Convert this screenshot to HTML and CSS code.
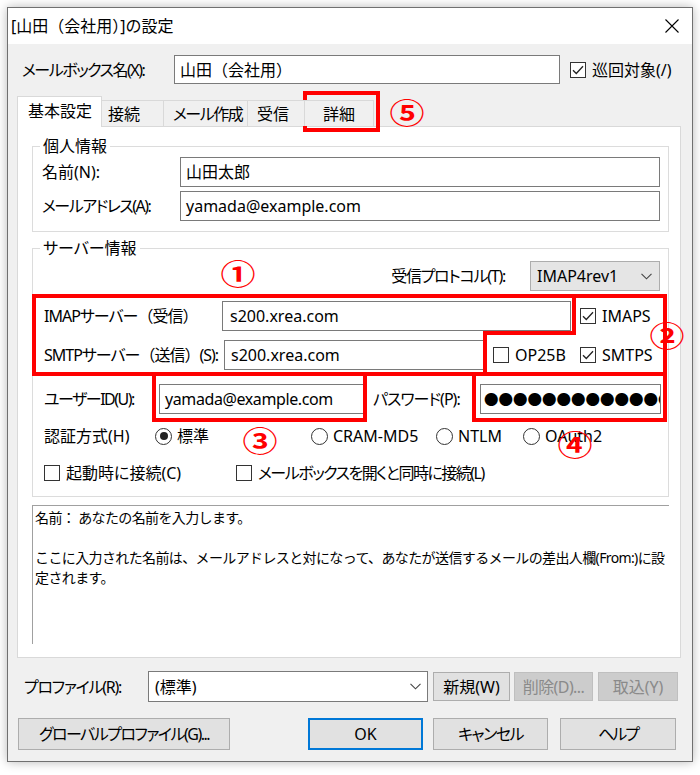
FILE: index.html
```html
<!DOCTYPE html>
<html lang="ja">
<head>
<meta charset="utf-8">
<title>[山田（会社用）]の設定</title>
<link rel="stylesheet" href="styles.css">
</head>
<body>
<div class="window">
  <div class="titlebar">
    <span class="title">[山田（会社用）]の設定</span>
    <svg class="close" width="14" height="14" viewBox="0 0 14 14"><path d="M0.5 0.5L13.5 13.5M13.5 0.5L0.5 13.5" stroke="#000" stroke-width="1.1" fill="none"/></svg>
  </div>
  <div class="client">
    <div class="mb-row">
      <span class="mb-label t15">メールボックス名(X):</span>
      <div class="textbox mb-input">山田（会社用）</div>
      <span class="check-item mb-check"><span class="cb"><svg width="14" height="14" viewBox="0 0 14 14"><path d="M2 7.2L5.3 10.5L12 3.2" stroke="#222" stroke-width="1.3" fill="none"/></svg></span><span>巡回対象(/)</span></span>
    </div>

    <div class="tabs">
      <div class="tab active">基本設定</div>
      <div class="tab t-conn">接続</div>
      <div class="tab t-compose t15">メール作成</div>
      <div class="tab t-recv">受信</div>
      <div class="tab t-detail">詳細</div>
    </div>

    <div class="panel">
      <fieldset class="group g-personal">
        <legend>個人情報</legend>
        <div class="frow name-row">
          <span class="flabel w147">名前(N):</span>
          <div class="textbox w480">山田太郎</div>
        </div>
        <div class="frow mail-row">
          <span class="flabel w147 t15">メールアドレス(A):</span>
          <div class="textbox w480">yamada@example.com</div>
        </div>
      </fieldset>

      <fieldset class="group g-server">
        <legend>サーバー情報</legend>
        <div class="frow proto-row">
          <span class="proto-label t12">受信プロトコル(T):</span>
          <div class="select proto-select"><span>IMAP4rev1</span><svg width="11" height="7" viewBox="0 0 11 7"><path d="M0.5 0.8L5.5 5.8L10.5 0.8" stroke="#444" stroke-width="1.1" fill="none"/></svg></div>
        </div>
        <div class="frow imap-row">
          <span class="flabel w189 t1">IMAPサーバー<span class="fw">（受信）</span></span>
          <div class="textbox pad7 w349">s200.xrea.com</div>
          <span class="check-item imaps"><span class="cb"><svg width="14" height="14" viewBox="0 0 14 14"><path d="M2 7.2L5.3 10.5L12 3.2" stroke="#222" stroke-width="1.3" fill="none"/></svg></span><span>IMAPS</span></span>
        </div>
        <div class="frow smtp-row">
          <span class="flabel w191 t1">SMTPサーバー<span class="fw">（送信）</span>(S):</span>
          <div class="textbox pad6 w260">s200.xrea.com</div>
          <span class="check-item op25b"><span class="cb"></span><span>OP25B</span></span>
          <span class="check-item"><span class="cb"><svg width="14" height="14" viewBox="0 0 14 14"><path d="M2 7.2L5.3 10.5L12 3.2" stroke="#222" stroke-width="1.3" fill="none"/></svg></span><span>SMTPS</span></span>
        </div>
        <div class="frow user-row">
          <span class="flabel w126 t15">ユーザーID(U):</span>
          <div class="textbox w205 latin">yamada@example.com</div>
          <span class="pw-label t1">パスワード(P):</span>
          <div class="textbox pw-box">●●●●●●●●●●●●●●</div>
        </div>
        <div class="frow auth-row">
          <span class="flabel w122">認証方式(H)</span>
          <span class="check-item w156"><span class="rb on"></span><span>標準</span></span>
          <span class="check-item w125"><span class="rb"></span><span>CRAM-MD5</span></span>
          <span class="check-item w87"><span class="rb"></span><span>NTLM</span></span>
          <span class="check-item"><span class="rb"></span><span>OAuth2</span></span>
        </div>
        <div class="frow opt-row">
          <span class="check-item w192"><span class="cb"></span><span>起動時に接続(C)</span></span>
          <span class="check-item"><span class="cb"></span><span class="t15">メールボックスを開くと同時に接続(L)</span></span>
        </div>
      </fieldset>

      <div class="help">
        <p>名前： あなたの名前を入力します。</p>
        <p>&nbsp;</p>
        <p>ここに入力された名前は、メールアドレスと対になって、あなたが送信するメールの差出人欄(From:)に設</p>
        <p>定されます。</p>
      </div>
    </div>

    <div class="profile-row">
      <span class="pr-label t12">プロファイル(R):</span>
      <div class="select edit pr-select"><span>(標準)</span><svg width="11" height="7" viewBox="0 0 11 7"><path d="M0.5 0.8L5.5 5.8L10.5 0.8" stroke="#444" stroke-width="1.1" fill="none"/></svg></div>
      <div class="btn b-new">新規(W)</div>
      <div class="btn disabled b-del t05">削除(D)...</div>
      <div class="btn disabled b-imp">取込(Y)</div>
    </div>

    <div class="button-row">
      <div class="btn b-global t15">グローバルプロファイル(G)...</div>
      <div class="btn default b-ok">OK</div>
      <div class="btn b-cancel t15">キャンセル</div>
      <div class="btn b-help t2">ヘルプ</div>
    </div>
  </div>
</div>

<svg class="overlay" width="700" height="775" viewBox="0 0 700 775">
  <g fill="none" stroke="#ff0000" stroke-width="4">
    <rect x="305" y="93" width="73" height="37"/>
    <path d="M34 296H665V374H34Z"/>
    <path d="M574 296V333H485V374"/>
    <path d="M154 374V420H365V374"/>
    <path d="M474 374V420H665V374"/>
  </g>
  <g class="marks">
    <text transform="translate(238 273) scale(1.25 1)">①</text>
    <text transform="translate(667 335) scale(1.25 1)">②</text>
    <text transform="translate(260 440) scale(1.25 1)">③</text>
    <text transform="translate(575 444) scale(1.25 1)">④</text>
    <text transform="translate(407 112) scale(1.25 1)">⑤</text>
  </g>
</svg>
</body>
</html>
```

FILE: styles.css
```css
* {
  box-sizing: border-box;
}

html,
body {
  margin: 0;
  padding: 0;
}

body {
  width: 700px;
  height: 775px;
  overflow: hidden;
  position: relative;
  background: #ffffff;
  font-family: "Noto Sans", "Noto Sans CJK JP", sans-serif;
  font-size: 16px;
  line-height: 20px;
  color: #000;
  font-feature-settings: "palt" 1;
}

/* letter-spacing helpers for condensed UI kana */
.t05 { letter-spacing: -0.6px; }
.t1 { letter-spacing: -1px; }
.t12 { letter-spacing: -1.25px; }
.t15 { letter-spacing: -1.5px; }
.t2 { letter-spacing: -2px; }

.fw {
  font-feature-settings: normal;
}

.window {
  margin: 7px 0 0 7px;
  width: 686px;
  height: 755px;
  border: 1px solid #707070;
  box-shadow: 0 0 10px rgba(0, 0, 0, 0.28);
  display: flex;
  flex-direction: column;
  background: #f0f0f0;
}

.titlebar {
  flex: none;
  height: 36px;
  background: #fff;
  display: flex;
  align-items: center;
  justify-content: space-between;
  padding: 0 13px 0 3px;
}

.title {
  font-feature-settings: normal;
}

.close {
  display: block;
}

.client {
  flex: 1;
  display: flex;
  flex-direction: column;
}

/* generic controls */
.textbox {
  flex: none;
  height: 30px;
  background: #fff;
  border: 1px solid #7a7a7a;
  padding-left: 5px;
  display: flex;
  align-items: center;
  white-space: nowrap;
  overflow: hidden;
  font-feature-settings: normal;
}

.latin {
  letter-spacing: -0.4px;
}

.pad7 { padding-left: 7px; }
.pad6 { padding-left: 6px; }

.check-item {
  flex: none;
  display: flex;
  align-items: center;
  white-space: nowrap;
}

.cb {
  flex: none;
  width: 16px;
  height: 16px;
  border: 1px solid #333;
  background: #fff;
  margin-right: 6px;
  display: flex;
  align-items: center;
  justify-content: center;
}

.cb svg {
  display: block;
}

.rb {
  flex: none;
  width: 17px;
  height: 17px;
  border: 1px solid #333;
  border-radius: 50%;
  background: #fff;
  margin-right: 5px;
  display: flex;
  align-items: center;
  justify-content: center;
}

.rb.on::after {
  content: "";
  width: 8px;
  height: 8px;
  border-radius: 50%;
  background: #222;
}

.select {
  flex: none;
  height: 30px;
  border: 1px solid #adadad;
  background: #e5e5e5;
  display: flex;
  align-items: center;
  justify-content: space-between;
  padding: 0 7px 0 6px;
  white-space: nowrap;
}

.select svg {
  display: block;
}

.select.edit {
  background: #fff;
  border-color: #7a7a7a;
}

.btn {
  flex: none;
  height: 29px;
  background: #e1e1e1;
  border: 1px solid #adadad;
  display: flex;
  align-items: center;
  justify-content: center;
  white-space: nowrap;
}

.btn.disabled {
  background: #cccccc;
  border-color: #bfbfbf;
  color: #8a8a8a;
}

.btn.default {
  border: 2px solid #0078d7;
}

/* mailbox row */
.mb-row {
  display: flex;
  align-items: center;
  height: 29px;
  margin-top: 11px;
}

.mb-label {
  flex: none;
  width: 166px;
  padding-left: 14px;
  white-space: nowrap;
}

.mb-input {
  width: 386px;
  height: 29px;
}

.mb-check {
  margin-left: 10px;
}

/* tabs */
.tabs {
  display: flex;
  align-items: flex-end;
  height: 31px;
  margin: 12px 0 0 9px;
  position: relative;
  z-index: 1;
}

.tab {
  flex: none;
  height: 26px;
  margin-bottom: 1px;
  background: #f0f0f0;
  border-top: 1px solid #d9d9d9;
  border-right: 1px solid #d9d9d9;
  display: flex;
  align-items: center;
  padding-left: 6px;
  white-space: nowrap;
}

.tab.active {
  width: 85px;
  height: 31px;
  margin-bottom: 0;
  background: #fff;
  border: 1px solid #d9d9d9;
  border-bottom: none;
  padding: 0 0 3px 10px;
}

.t-conn { width: 62px; }
.t-compose { width: 84px; padding-left: 9px; }
.t-recv { width: 57px; padding-left: 9px; }
.t-detail { width: 69px; padding-left: 0; justify-content: center; }

/* panel */
.panel {
  flex: none;
  margin: -1px 0 0 9px;
  width: 664px;
  height: 532px;
  background: #fff;
  border: 1px solid #d9d9d9;
  padding-left: 14px;
}

.group {
  margin: 0;
  padding: 0;
  border: 1px solid #dcdcdc;
  width: 637px;
  min-width: 0;
}

.group legend {
  margin-left: 7px;
  padding: 0 3px;
  line-height: 20px;
}

.g-personal {
  margin-top: 9px;
  height: 96px;
}

.g-server {
  margin-top: 6px;
  height: 259px;
}

.frow {
  display: flex;
  align-items: center;
  height: 30px;
}

.flabel {
  flex: none;
  padding-left: 11px;
  white-space: nowrap;
}

.w147 { width: 147px; padding-left: 9px; }
.w189 { width: 189px; }
.w191 { width: 191px; }
.w126 { width: 126px; }
.w122 { width: 122px; }
.w156 { width: 156px; }
.w125 { width: 125px; }
.w87 { width: 87px; }
.w192 { width: 192px; }
.w480 { width: 480px; }
.w349 { width: 349px; }
.w260 { width: 260px; }
.w205 { width: 205px; }

.name-row { margin-top: 1px; }
.mail-row { margin-top: 4px; }

.proto-row {
  margin-top: 3px;
  justify-content: flex-end;
  padding-right: 8px;
}

.proto-label {
  margin-right: 25px;
  white-space: nowrap;
}

.proto-select {
  width: 130px;
}

.imap-row { margin-top: 10px; }
.imaps { margin-left: 9px; }

.smtp-row { margin-top: 9px; }
.op25b { width: 87px; margin-left: 9px; }

.user-row { margin-top: 14px; }

.pw-label {
  flex: none;
  width: 107px;
  margin-left: 9px;
  white-space: nowrap;
}

.pw-box {
  width: 181px;
  padding-left: 3px;
  font-family: "Noto Sans CJK JP", sans-serif;
  font-size: 14.5px;
}

.auth-row {
  margin-top: 12px;
  height: 20px;
}

.opt-row {
  margin-top: 17px;
  height: 20px;
  padding-left: 11px;
}

/* help text */
.help {
  margin-top: 8px;
  width: 637px;
  height: 139px;
  border-top: 1px solid #a0a0a0;
  border-left: 1px solid #a0a0a0;
  padding: 2px 0 0 2px;
  font-size: 14px;
  line-height: 20px;
  letter-spacing: -0.62px;
  font-feature-settings: normal;
}

.help p {
  margin: 0;
  white-space: nowrap;
}

/* profile row */
.profile-row {
  display: flex;
  align-items: center;
  height: 31px;
  margin-top: 13px;
}

.pr-label {
  flex: none;
  width: 140px;
  padding-left: 16px;
  white-space: nowrap;
}

.pr-select {
  width: 280px;
  height: 31px;
  padding-right: 6px;
}

.b-new { width: 77px; margin-left: 5px; }
.b-del { width: 79px; margin-left: 4px; }
.b-imp { width: 80px; margin-left: 5px; }

/* bottom buttons */
.button-row {
  display: flex;
  align-items: center;
  height: 32px;
  margin-top: 16px;
}

.button-row .btn {
  height: 32px;
}

.b-global { width: 212px; margin-left: 10px; }
.b-ok { width: 115px; margin-left: 78px; }
.b-cancel { width: 115px; margin-left: 10px; }
.b-help { width: 116px; margin-left: 12px; }

/* annotation overlay */
.overlay {
  position: absolute;
  left: 0;
  top: 0;
  pointer-events: none;
}

.marks text {
  font-family: "Noto Sans CJK JP", sans-serif;
  font-weight: bold;
  font-size: 28px;
  fill: #ff0000;
  text-anchor: middle;
  dominant-baseline: central;
}
```
